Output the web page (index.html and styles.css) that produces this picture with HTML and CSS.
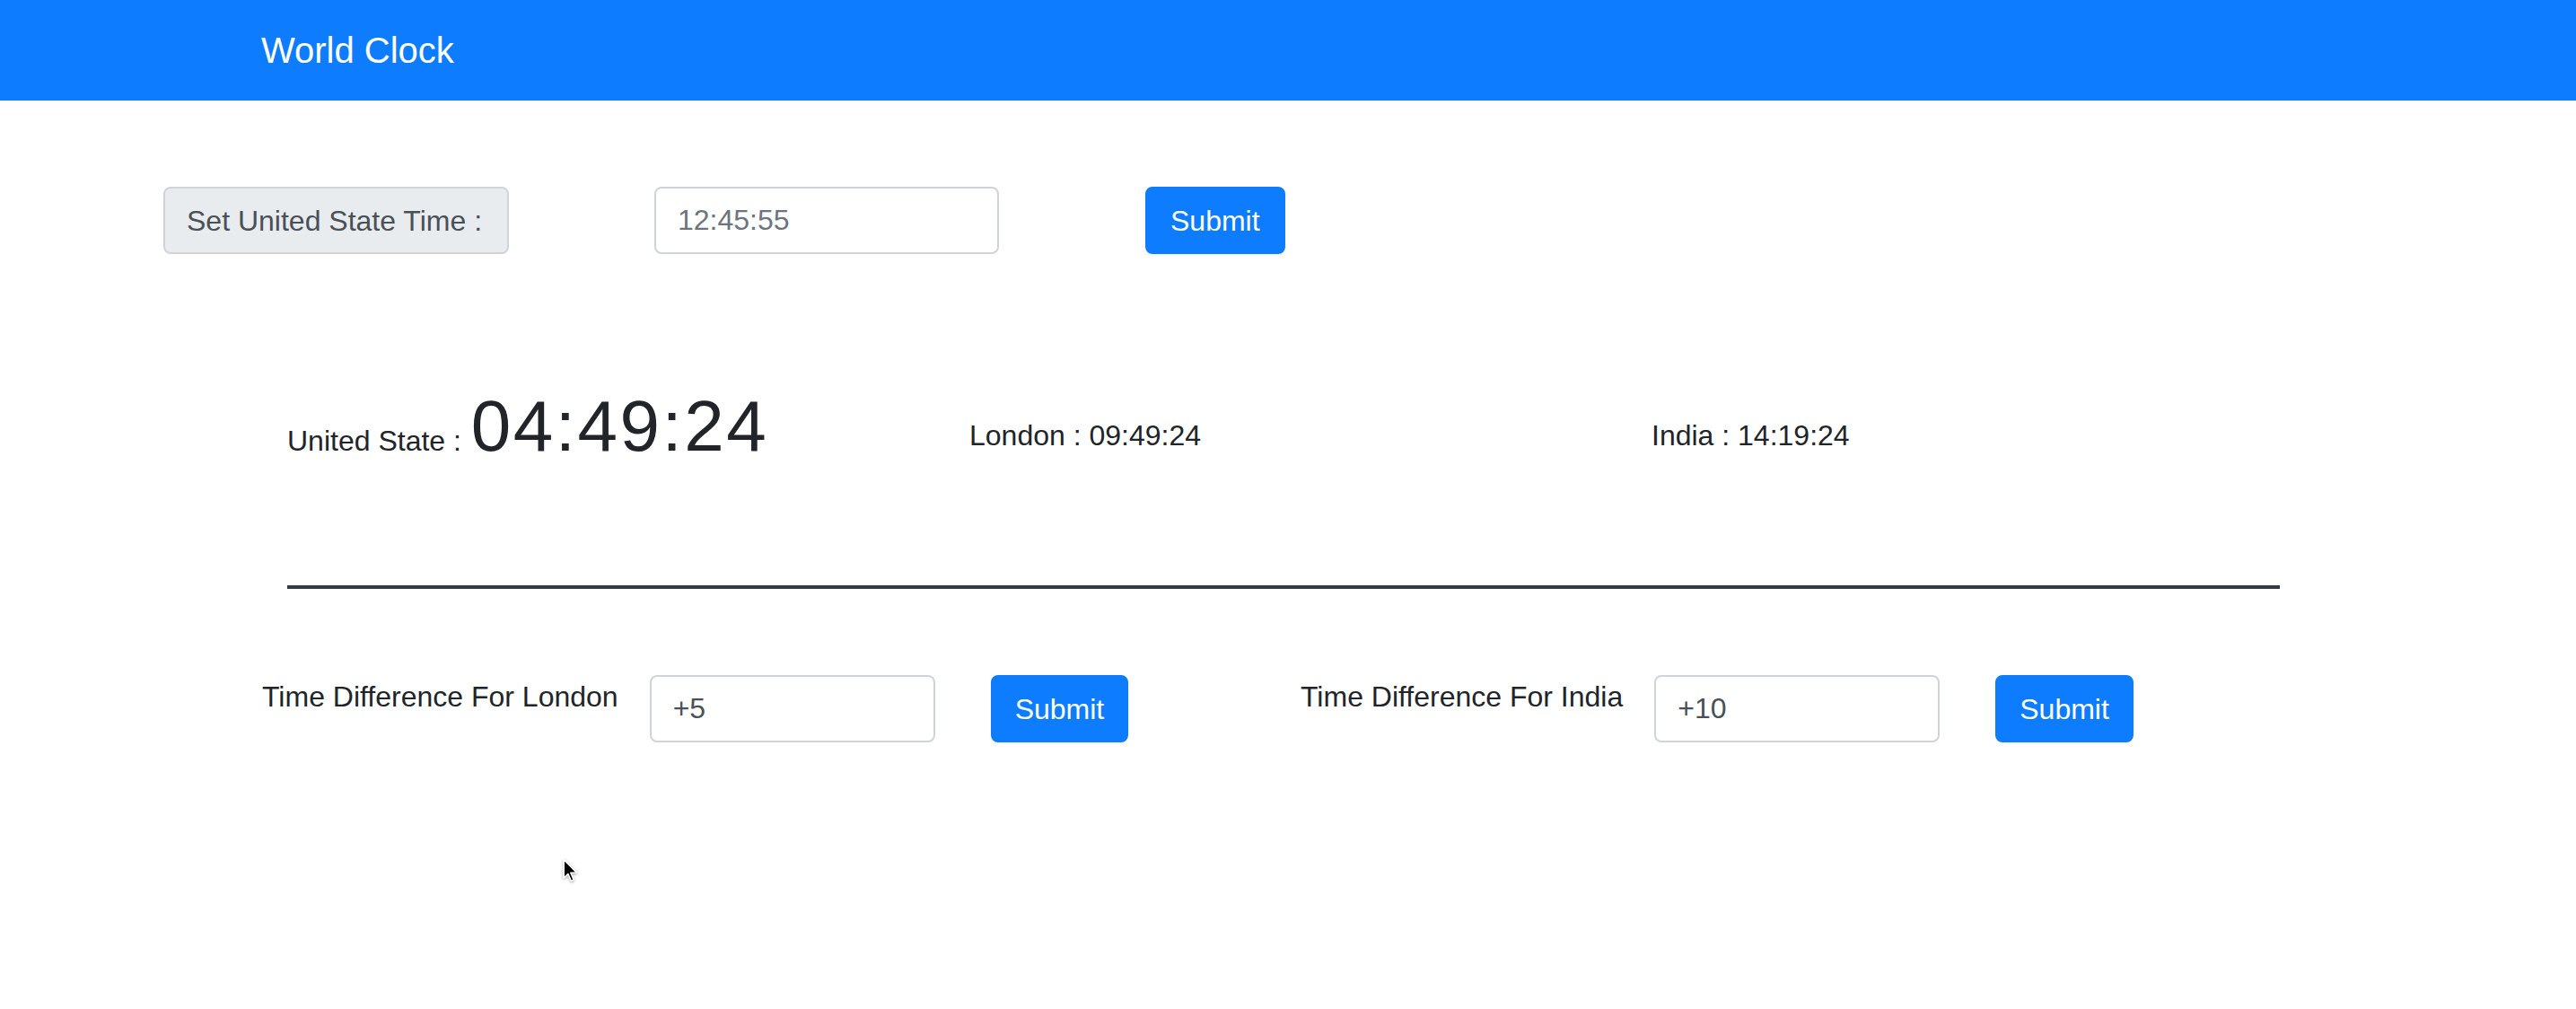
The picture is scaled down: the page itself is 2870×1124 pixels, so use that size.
FILE: index.html
```html
<!DOCTYPE html>
<html lang="en">
<head>
<meta charset="utf-8">
<title>World Clock</title>
<link rel="stylesheet" href="styles.css">
</head>
<body>
<nav class="navbar"><span class="brand">World Clock</span></nav>
<main>
  <form class="set-row">
    <span class="addon">Set United State Time :</span>
    <input class="field field-wide" type="text" placeholder="12:45:55">
    <button class="btn" type="button">Submit</button>
  </form>
  <section class="clocks">
    <div class="clock">United State : <span class="big-time">04:49:24</span></div>
    <div class="clock clock-small">London : 09:49:24</div>
    <div class="clock clock-small">India : 14:19:24</div>
  </section>
  <hr class="divider">
  <section class="diff-row">
    <div class="diff-group">
      <label class="diff-label">Time Difference For London</label>
      <input class="field field-narrow" type="text" value="+5">
      <button class="btn" type="button">Submit</button>
    </div>
    <div class="diff-group">
      <label class="diff-label">Time Difference For India</label>
      <input class="field field-narrow" type="text" value="+10">
      <button class="btn" type="button">Submit</button>
    </div>
  </section>
</main>
<svg class="cursor" viewBox="0 0 14 20" aria-hidden="true">
  <path d="M1.5 1.5 L1.5 16 L4.8 12.8 L7.2 18.3 L9.3 17.4 L6.9 11.9 L11.6 11.9 Z" fill="#000" stroke="#fff" stroke-width="1.1" stroke-linejoin="round"/>
</svg>
</body>
</html>
```
FILE: styles.css
```css
body {
  margin: 0;
  font-family: "Liberation Sans", Arial, sans-serif;
  font-size: 32px;
  line-height: 1.5;
  color: #212529;
  background: #fff;
}

.navbar {
  box-sizing: border-box;
  height: 112px;
  background: #0e7cff;
  padding: 26px 0 0 291px;
}

.brand {
  display: block;
  font-size: 40px;
  line-height: 60px;
  color: #fff;
}

.set-row {
  display: flex;
  margin: 96px 0 0;
  padding-left: 182px;
}

.addon {
  box-sizing: border-box;
  width: 385px;
  height: 75px;
  display: flex;
  align-items: center;
  padding: 0 24px;
  border: 2px solid #ced4da;
  border-radius: 8px;
  background: #e9ecef;
  color: #495057;
  white-space: nowrap;
}

.field {
  box-sizing: border-box;
  height: 75px;
  border: 2px solid #ced4da;
  border-radius: 8px;
  padding: 0 24px;
  font: inherit;
  color: #495057;
  background: #fff;
  outline: none;
}

.field::placeholder {
  color: #6c757d;
  opacity: 1;
}

.field-wide {
  width: 384px;
  margin-left: 162px;
}

.field-narrow {
  width: 318px;
}

.btn {
  box-sizing: border-box;
  height: 75px;
  padding: 0 25px;
  border: 2px solid #0e7cff;
  border-radius: 8px;
  background: #0e7cff;
  color: #fff;
  font: inherit;
  cursor: pointer;
}

.set-row .btn {
  margin-left: 163px;
  padding: 0 26px;
}

.clocks {
  display: flex;
  align-items: flex-start;
  margin-top: 144px;
  padding-left: 320px;
}

.clock {
  flex: none;
  width: 760px;
  white-space: nowrap;
}

.clock-small {
  margin-top: 34px;
}

.big-time {
  font-size: 80px;
  line-height: 1.2;
  letter-spacing: 2.5px;
  margin-left: 2px;
}

.divider {
  box-sizing: border-box;
  margin: 129px 0 0 320px;
  width: 2220px;
  height: 4px;
  border: 0;
  background: #343a40;
}

.diff-row {
  display: grid;
  grid-template-columns: 1157px auto;
  margin-top: 96px;
  padding-left: 292px;
}

.diff-group {
  display: flex;
  align-items: flex-start;
}

.diff-label {
  margin-right: 35px;
  white-space: nowrap;
  line-height: 48px;
}

.diff-group .btn {
  margin-left: 62px;
}

.cursor {
  position: absolute;
  left: 626px;
  top: 955px;
  width: 20px;
  height: 29px;
  filter: drop-shadow(0 1px 1.5px rgba(0, 0, 0, 0.35));
}
```
